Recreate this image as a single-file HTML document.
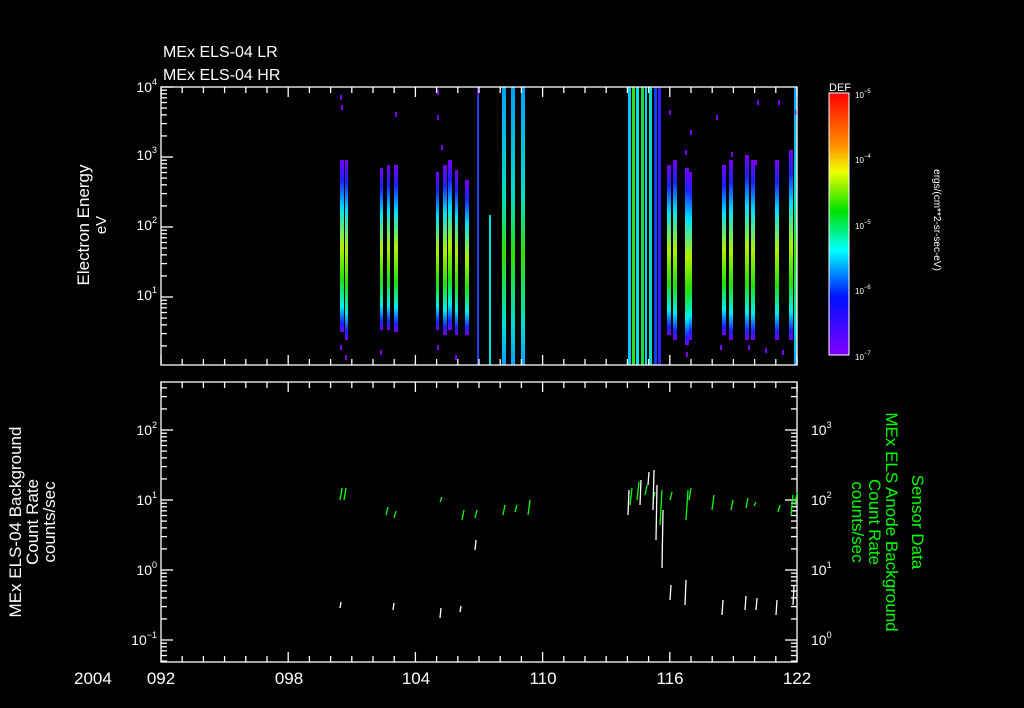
<!DOCTYPE html>
<html><head><meta charset="utf-8"><style>
html,body{margin:0;padding:0;background:#000;width:1024px;height:708px;overflow:hidden}
svg{display:block}
text{font-family:"Liberation Sans",sans-serif;fill:#fff}
</style></head><body>
<svg id="s" width="1024" height="708" viewBox="0 0 1024 708" xmlns="http://www.w3.org/2000/svg">
<defs>
<linearGradient id="bar" x1="0" y1="0" x2="0" y2="1">
<stop offset="0" stop-color="#7a00ff"/>
<stop offset="0.12" stop-color="#1a20ff"/>
<stop offset="0.28" stop-color="#00e0ff"/>
<stop offset="0.5" stop-color="#b0f000"/>
<stop offset="0.7" stop-color="#20e010"/>
<stop offset="0.85" stop-color="#00f0f0"/>
<stop offset="0.95" stop-color="#1a20ff"/>
<stop offset="1" stop-color="#7a00ff"/>
</linearGradient>
<linearGradient id="tall" x1="0" y1="0" x2="0" y2="1">
<stop offset="0" stop-color="#00a0ff"/>
<stop offset="0.4" stop-color="#00e0c0"/>
<stop offset="0.6" stop-color="#30e000"/>
<stop offset="0.85" stop-color="#00e0d0"/>
<stop offset="1" stop-color="#00a0ff"/>
</linearGradient>
<linearGradient id="cb" x1="0" y1="0" x2="0" y2="1">
<stop offset="0" stop-color="#ff0000"/>
<stop offset="0.2" stop-color="#ff9000"/>
<stop offset="0.3" stop-color="#f0ff00"/>
<stop offset="0.45" stop-color="#00e000"/>
<stop offset="0.6" stop-color="#00ffff"/>
<stop offset="0.78" stop-color="#0010ff"/>
<stop offset="1" stop-color="#8000ff"/>
</linearGradient>
</defs>
<g id="bars"></g>
<g id="ax" stroke="#fff" stroke-width="1.3" fill="none"></g>
<g id="lines" stroke-width="1.3" fill="none"></g>
<text x="163" y="57" font-size="16">MEx ELS-04 LR</text>
<text x="163" y="80" font-size="16">MEx ELS-04 HR</text>
<text transform="translate(89,225) rotate(-90)" font-size="17" text-anchor="middle">Electron Energy</text>
<text transform="translate(106,225) rotate(-90)" font-size="15" text-anchor="middle">eV</text>
<text x="829" y="91" font-size="11">DEF</text>
<rect x="829" y="93" width="20" height="262" fill="url(#cb)" stroke="#fff"/>
<text transform="translate(934,220) rotate(90)" font-size="10" text-anchor="middle">ergs/(cm**2-sr-sec-eV)</text>
<text transform="translate(21,522) rotate(-90)" font-size="17" text-anchor="middle">MEx ELS-04 Background</text>
<text transform="translate(38,522) rotate(-90)" font-size="17" text-anchor="middle">Count Rate</text>
<text transform="translate(55,522) rotate(-90)" font-size="17" text-anchor="middle">counts/sec</text>
<g font-size="17" text-anchor="middle">
<text style="fill:#00ff00" transform="translate(912,522) rotate(90)">Sensor Data</text>
<text style="fill:#00ff00" transform="translate(886,522) rotate(90)">MEx ELS Anode Background</text>
<text style="fill:#00ff00" transform="translate(869,522) rotate(90)">Count Rate</text>
<text style="fill:#00ff00" transform="translate(852,522) rotate(90)">counts/sec</text>
</g>
<g font-size="17">
<text x="74" y="684">2004</text>
<text x="161" y="684" text-anchor="middle">092</text>
<text x="289" y="684" text-anchor="middle">098</text>
<text x="416" y="684" text-anchor="middle">104</text>
<text x="543" y="684" text-anchor="middle">110</text>
<text x="670" y="684" text-anchor="middle">116</text>
<text x="797" y="684" text-anchor="middle">122</text>
</g>
<g id="lab" font-size="14"></g>
</svg>
<script>
var NS="http://www.w3.org/2000/svg";
function el(p,t,a){var e=document.createElementNS(NS,t);for(var k in a)e.setAttribute(k,a[k]);p.appendChild(e);return e;}
var ax=document.getElementById('ax'),bars=document.getElementById('bars'),lab=document.getElementById('lab'),ln=document.getElementById('lines');
el(ax,'rect',{x:161,y:87,width:636,height:278});
el(ax,'rect',{x:161,y:382,width:636,height:280});
for(var d=0;d<=30;d++){var x=161+d*21.2;var L=(d%6==0)?10:6;
[[87,1],[365,-1],[382,1],[662,-1]].forEach(function(p){el(ax,'line',{x1:x,y1:p[0],x2:x,y2:p[0]+p[1]*L});});}
function logTicks(x0,dir,ytop,ybot,yDec0,dec0){
  for(var k=-3;k<6;k++){for(var m=1;m<10;m++){var y=yDec0-(k-dec0+Math.log10(m))*70;
    if(y<ytop-0.5||y>ybot+0.5)continue;var L=(m==1)?12:6;el(ax,'line',{x1:x0,y1:y,x2:x0+dir*L,y2:y});}}
}
logTicks(161,1,87,365,87,4);
logTicks(161,1,382,662,430,2);
logTicks(797,-1,382,662,430,3);
function lbl(x,y,exp,anchor){var t=el(lab,'text',{x:x,y:y,'text-anchor':anchor||'end'});
  t.appendChild(document.createTextNode('10'));
  var s=el(t,'tspan',{dy:-7,'font-size':9});s.textContent=exp;}
[[92,'4'],[160,'3'],[230,'2'],[300,'1']].forEach(function(a){lbl(157,a[0],a[1]);});
[[435,'2'],[505,'1'],[575,'0'],[645,'−1']].forEach(function(a){lbl(157,a[0],a[1]);});
[[435,'3'],[505,'2'],[575,'1'],[645,'0']].forEach(function(a){lbl(811,a[0],a[1],'start');});
[[97,'−5'],[162,'−4'],[228,'−5'],[293,'−6'],[359,'−7']].forEach(function(a){var t=el(lab,'text',{x:855,y:a[0]+1,'font-size':8});t.appendChild(document.createTextNode('10'));var s=el(t,'tspan',{dy:-5,'font-size':6});s.textContent=a[1];});
for(var i=0;i<40;i++){var y=93+i*6.55;el(ax,'line',{x1:849,y1:y,x2:844,y2:y,'stroke-width':0.8});}
var B=[[340,4,160,332],[345,3,160,340],[380,3,168,330],[387,3,165,330],[394,4,165,332],[436,3,172,330],[443,4,165,335],[448,4,160,330],[455,3,170,335],[465,4,180,335],[502,4,87,365],[511,4,87,365],[521,4,87,365],[667,4,165,335],[673,4,160,340],[685,4,168,345],[689,3,172,340],[722,4,165,335],[729,4,160,340],[745,4,155,340],[751,4,160,340],[775,4,160,340],[789,4,150,340],[794,3,87,365]];
B.forEach(function(b){el(bars,'rect',{x:b[0],y:b[2],width:b[1],height:b[3]-b[2],fill:(b[2]<=87?'url(#tall)':'url(#bar)')});});
var T=[[628,3,'#00c8ff'],[632,3,'#30e020'],[636,3,'#00e0e0'],[641,3,'#20d840'],[645,2,'#00d8ff'],[649,3,'#00e0c0'],[654,3,'#1040ff'],[658,3,'#3020ff'],[477,2,'#2040ff'],[489,2,'#00e0e0']];
T.forEach(function(b){el(bars,'rect',{x:b[0],y:(b[0]==489?215:87),width:b[1],height:(b[0]==489?150:278),fill:b[2]});});
var sp=[[340,95],[341,105],[395,112],[437,90],[437,115],[441,145],[477,90],[669,110],[685,150],[690,130],[716,115],[731,152],[755,160],[757,100],[778,100],[795,110],[340,345],[345,355],[380,350],[437,345],[455,355],[686,352],[720,345],[748,345],[765,348],[782,350]];
sp.forEach(function(p){el(bars,'rect',{x:p[0],y:p[1],width:2,height:5,fill:'#7a00ff'});});
var G=[[340,488,500],[344,488,500],[386,507,515],[394,511,518],[440,497,502],[462,510,520],[475,510,518],[503,505,515],[515,505,512],[528,500,515],[630,488,505],[637,482,500],[645,485,495],[653,492,500],[660,490,525],[670,492,500],[686,490,520],[689,488,500],[712,495,510],[731,500,510],[746,498,508],[754,502,506],[778,505,512],[791,495,515],[795,492,505]];
G.forEach(function(g){el(ln,'line',{x1:g[0],y1:g[2],x2:g[0]+2,y2:g[1],stroke:'#00ff00'});});
var W=[[628,490,515],[640,480,505],[648,472,485],[653,470,510],[656,485,540],[662,510,568],[475,540,550],[670,585,600],[685,580,605],[722,600,615],[745,596,610],[756,598,610],[776,600,615],[793,586,605],[340,602,608],[393,603,610],[440,608,618],[460,606,612]];
W.forEach(function(g){el(ln,'line',{x1:g[0],y1:g[2],x2:g[0]+1,y2:g[1],stroke:'#fff'});});
</script>
</body></html>
